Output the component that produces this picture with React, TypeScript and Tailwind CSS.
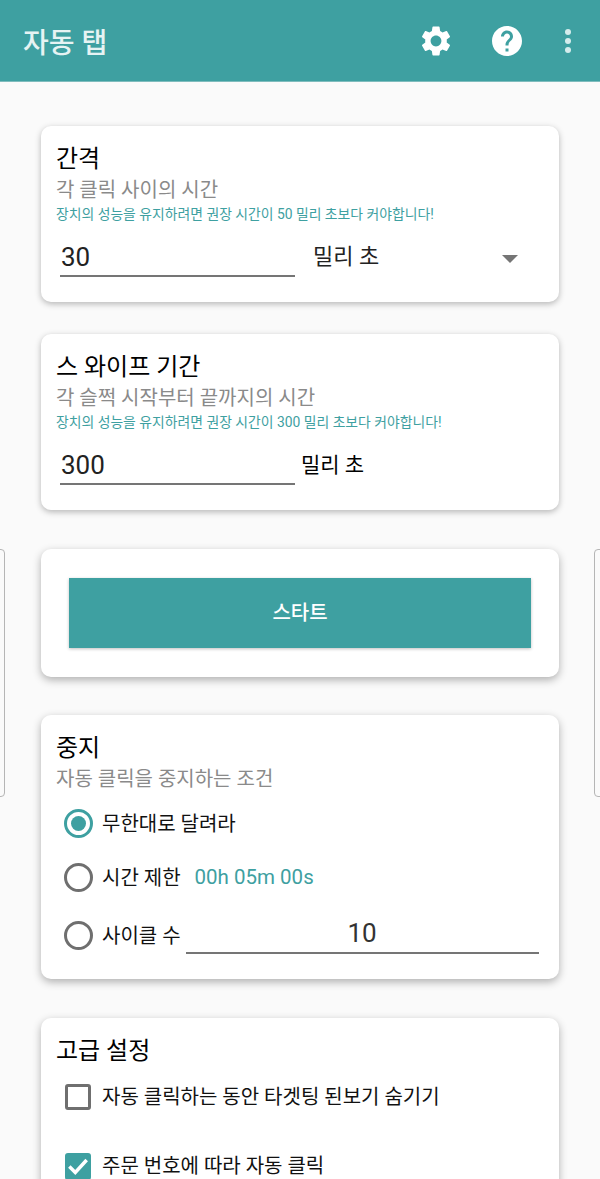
const KR = "font-['Roboto','Noto_Sans_CJK_KR',sans-serif]";

function Radio({ checked }: { checked?: boolean }) {
  return (
    <span
      className={`flex h-[29px] w-[29px] shrink-0 items-center justify-center rounded-full border-[3px] ${
        checked ? "border-[#3ea0a1]" : "border-[#6f6f6f]"
      }`}
    >
      {checked && <span className="h-[15px] w-[15px] rounded-full bg-[#3ea0a1]" />}
    </span>
  );
}

function CardHeading({ title, sub, hint }: { title: string; sub?: string; hint?: string }) {
  return (
    <>
      <h2 className="h-[30px] text-[24px] leading-[30px] text-black">{title}</h2>
      {sub && <p className="mt-[4px] h-[24px] text-[20px] leading-[24px] text-[#8a8a8a]">{sub}</p>}
      {hint && <p className="mt-[4px] h-[16px] text-[13.85px] leading-[16px] text-[#3ea0a1]">{hint}</p>}
    </>
  );
}

export default function App() {
  return (
    <div className={`relative h-[1179px] w-[600px] overflow-hidden bg-[#fafafa] ${KR}`}>
      <header className="flex h-[82px] items-center justify-between border-b border-[#7fbcbd] bg-[#3ea0a1] pl-[23px] pr-[27px]">
        <h1 className="mt-[6px] text-[28px] font-medium text-[#e6f3f3]">자동 탭</h1>
        <div className="flex items-center">
          <svg viewBox="0 0 24 24" className="h-[36px] w-[36px] fill-white">
            <path d="M19.14 12.94c.04-.3.06-.61.06-.94 0-.32-.02-.64-.07-.94l2.03-1.58a.49.49 0 0 0 .12-.61l-1.92-3.32a.488.488 0 0 0-.59-.22l-2.39.96c-.5-.38-1.03-.7-1.62-.94l-.36-2.54a.484.484 0 0 0-.48-.41h-3.84c-.24 0-.43.17-.47.41l-.36 2.54c-.59.24-1.13.57-1.62.94l-2.39-.96c-.22-.08-.47 0-.59.22L2.74 8.87c-.12.21-.08.47.12.61l2.03 1.58c-.05.3-.09.63-.09.94s.02.64.07.94l-2.03 1.58a.49.49 0 0 0-.12.61l1.92 3.32c.12.22.37.29.59.22l2.39-.96c.5.38 1.03.7 1.62.94l.36 2.54c.05.24.24.41.48.41h3.84c.24 0 .44-.17.47-.41l.36-2.54c.59-.24 1.13-.56 1.62-.94l2.39.96c.22.08.47 0 .59-.22l1.92-3.32c.12-.22.07-.47-.12-.61l-2.01-1.58zM12 15.6c-1.98 0-3.6-1.62-3.6-3.6s1.62-3.6 3.6-3.6 3.6 1.62 3.6 3.6-1.62 3.6-3.6 3.6z" />
          </svg>
          <svg viewBox="0 0 24 24" className="ml-[35px] h-[36px] w-[36px] fill-white">
            <path d="M12 2C6.48 2 2 6.48 2 12s4.48 10 10 10 10-4.48 10-10S17.52 2 12 2zm1 17h-2v-2h2v2zm2.07-7.75l-.9.92C13.45 12.9 13 13.5 13 15h-2v-.5c0-1.1.45-2.1 1.17-2.83l1.24-1.26c.37-.36.59-.86.59-1.41 0-1.1-.9-2-2-2s-2 .9-2 2H8c0-2.21 1.79-4 4-4s4 1.79 4 4c0 .88-.36 1.68-.93 2.25z" />
          </svg>
          <div className="ml-[38px] flex w-[10px] flex-col items-center gap-[3px]">
            <span className="h-[6px] w-[6px] rounded-full bg-[#d5ecec]" />
            <span className="h-[6px] w-[6px] rounded-full bg-[#d5ecec]" />
            <span className="h-[6px] w-[6px] rounded-full bg-[#d5ecec]" />
          </div>
        </div>
      </header>

      {/* side handles */}
      <div className="absolute left-[-8px] top-[549px] h-[248px] w-[13px] rounded-[4px] border border-[#b5b5b5]" />
      <div className="absolute right-[-8px] top-[549px] h-[248px] w-[14px] rounded-[4px] border border-[#b5b5b5]" />

      <main className="relative mx-[41px] flex flex-col pt-[44px]">
        <section className="h-[176px] rounded-[10px] bg-white px-[15px] pt-[18px] shadow-[0_2px_6px_rgba(0,0,0,0.28)]">
          <CardHeading
            title="간격"
            sub="각 클릭 사이의 시간"
            hint="장치의 성능을 유지하려면 권장 시간이 50 밀리 초보다 커야합니다!"
          />
          <div className="mt-[9px] flex items-start pl-[4px]">
            <div className="h-[46px] w-[235px] border-b-2 border-[#757575] pl-px pt-[6px] text-[26px] leading-[40px] text-[#222222]">
              30
            </div>
            <span className="ml-[18px] pt-[6px] text-[22px] leading-[40px] text-[#222222]">밀리 초</span>
            <span className="ml-[123px] mt-[24px] h-0 w-0 border-x-[8px] border-t-[8px] border-x-transparent border-t-[#757575]" />
          </div>
        </section>

        <section className="mt-[32px] h-[176px] rounded-[10px] bg-white px-[15px] pt-[18px] shadow-[0_2px_6px_rgba(0,0,0,0.28)]">
          <CardHeading
            title="스 와이프 기간"
            sub="각 슬쩍 시작부터 끝까지의 시간"
            hint="장치의 성능을 유지하려면 권장 시간이 300 밀리 초보다 커야합니다!"
          />
          <div className="mt-[9px] flex items-start pl-[4px]">
            <div className="h-[46px] w-[235px] border-b-2 border-[#757575] pl-px pt-[6px] text-[26px] leading-[40px] text-[#222222]">
              300
            </div>
            <span className="ml-[6px] pt-[6px] text-[21px] leading-[40px] text-black">밀리 초</span>
          </div>
        </section>

        <section className="mt-[39px] flex h-[128px] items-center justify-center rounded-[10px] bg-white shadow-[0_3px_8px_rgba(0,0,0,0.3)]">
          <button className="h-[70px] w-[462px] bg-[#3ea0a1] text-[20px] font-medium text-white shadow-[0_1px_3px_rgba(0,0,0,0.25)]">
            스타트
          </button>
        </section>

        <section className="mt-[38px] h-[264px] rounded-[10px] bg-white px-[15px] pt-[18px] shadow-[0_3px_8px_rgba(0,0,0,0.3)]">
          <CardHeading title="중지" sub="자동 클릭을 중지하는 조건" />
          <div className="mt-[18px] flex h-[29px] items-center pl-[8px]">
            <Radio checked />
            <span className="ml-[9px] text-[20px] text-[#111111]">무한대로 달려라</span>
          </div>
          <div className="mt-[25px] flex h-[29px] items-center pl-[8px]">
            <Radio />
            <span className="ml-[9px] text-[20px] text-[#111111]">시간 제한</span>
            <span className="ml-[14px] text-[20.5px] text-[#3ea0a1]">00h 05m 00s</span>
          </div>
          <div className="mt-[29px] flex h-[29px] items-center pl-[8px]">
            <Radio />
            <span className="ml-[9px] text-[20px] text-[#111111]">사이클 수</span>
            <div className="ml-[5px] mt-[1px] h-[36px] w-[353px] shrink-0 border-b-2 border-[#757575] text-center text-[26px] leading-[30px] text-[#333333]">
              10
            </div>
          </div>
        </section>

        <section className="mt-[39px] h-[300px] rounded-[10px] bg-white px-[15px] pt-[18px] shadow-[0_3px_8px_rgba(0,0,0,0.3)]">
          <CardHeading title="고급 설정" />
          <div className="mt-[17px] flex h-[28px] items-center pl-[9px]">
            <span className="h-[26px] w-[26px] shrink-0 rounded-[3px] border-[3px] border-[#6f6f6f]" />
            <span className="ml-[11px] text-[20px] text-[#111111]">자동 클릭하는 동안 타겟팅 된보기 숨기기</span>
          </div>
          <div className="mt-[41px] flex h-[28px] items-center pl-[9px]">
            <span className="flex h-[27px] w-[26px] shrink-0 items-center justify-center rounded-[3px] bg-[#3ea0a1]">
              <svg viewBox="0 0 24 24" className="h-[26px] w-[26px] fill-none stroke-white stroke-[3.2]">
                <path d="M4 12.5l5.5 5.5L20 6.5" />
              </svg>
            </span>
            <span className="ml-[11px] text-[20px] text-[#111111]">주문 번호에 따라 자동 클릭</span>
          </div>
        </section>
      </main>
    </div>
  );
}
